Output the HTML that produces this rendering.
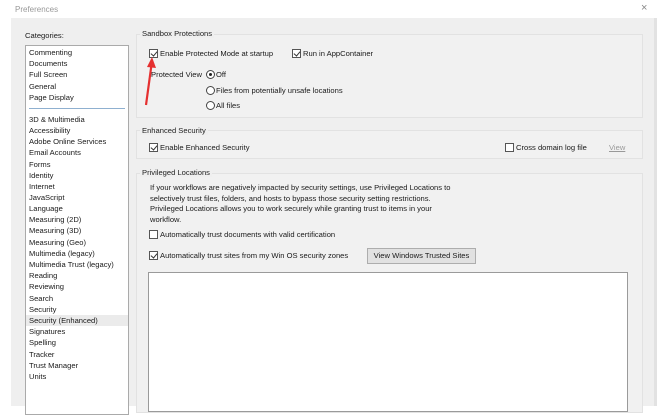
<!DOCTYPE html><html><head><style>
*{margin:0;padding:0;box-sizing:border-box}
body{width:657px;height:406px;overflow:hidden;background:#fff;font-family:"Liberation Sans",sans-serif;font-size:7.6px;color:#1a1a1a;position:relative}
.a{position:absolute;white-space:nowrap}
.dlg{position:absolute;left:11px;top:18px;width:643px;height:388px;background:#efefef}
.grp{position:absolute;border:1px solid #e2e2e2;background:#f1f1f1}
.gt{position:absolute;background:#efefef;padding:0 2px;color:#222}
.cb{position:absolute;width:9px;height:9px;border:1px solid #555;background:#fff}
.cb.c::after{content:"";position:absolute;left:2px;top:0px;width:3px;height:5px;border:solid #333;border-width:0 1px 1px 0;transform:rotate(40deg)}
.rb{position:absolute;width:9px;height:9px;border:1px solid #444;border-radius:50%;background:#fff}
.rb.c::after{content:"";position:absolute;left:2px;top:2px;width:3px;height:3px;border-radius:50%;background:#222}
.li{position:absolute;left:3px}
</style></head><body>
<div class="a" style="left:15px;top:5px;color:#999;font-size:8px">Preferences</div>
<div class="a" style="left:641px;top:2px;color:#888;font-size:11px">×</div>
<div class="dlg"></div>
<div style="position:absolute;left:654px;top:18px;width:3px;height:388px;background:#e2e2e2"></div>
<div class="a" style="left:25px;top:31px">Categories:</div>
<div style="position:absolute;left:25px;top:45px;width:104px;height:370px;background:#fff;border:1px solid #aaa">
<div class="li" style="top:2px">Commenting</div>
<div class="li" style="top:13px">Documents</div>
<div class="li" style="top:24px">Full Screen</div>
<div class="li" style="top:36px">General</div>
<div class="li" style="top:47px">Page Display</div>
<div style="position:absolute;left:3px;top:62px;width:96px;height:1px;background:#8fb0d0"></div>
<div class="li" style="top:69px">3D &amp; Multimedia</div>
<div class="li" style="top:80px">Accessibility</div>
<div class="li" style="top:91px">Adobe Online Services</div>
<div class="li" style="top:102px">Email Accounts</div>
<div class="li" style="top:114px">Forms</div>
<div class="li" style="top:125px">Identity</div>
<div class="li" style="top:136px">Internet</div>
<div class="li" style="top:147px">JavaScript</div>
<div class="li" style="top:158px">Language</div>
<div class="li" style="top:169px">Measuring (2D)</div>
<div class="li" style="top:180px">Measuring (3D)</div>
<div class="li" style="top:192px">Measuring (Geo)</div>
<div class="li" style="top:203px">Multimedia (legacy)</div>
<div class="li" style="top:214px">Multimedia Trust (legacy)</div>
<div class="li" style="top:225px">Reading</div>
<div class="li" style="top:236px">Reviewing</div>
<div class="li" style="top:248px">Search</div>
<div class="li" style="top:259px">Security</div>
<div style="position:absolute;left:0;top:269px;width:102px;height:11px;background:#ebebeb"></div>
<div class="li" style="top:270px">Security (Enhanced)</div>
<div class="li" style="top:281px">Signatures</div>
<div class="li" style="top:292px">Spelling</div>
<div class="li" style="top:304px">Tracker</div>
<div class="li" style="top:315px">Trust Manager</div>
<div class="li" style="top:326px">Units</div>
</div>

<div class="grp" style="left:136px;top:34px;width:507px;height:84px"></div>
<div class="gt a" style="left:140px;top:29px">Sandbox Protections</div>
<div class="cb c" style="left:149px;top:49px"></div>
<div class="a" style="left:160px;top:49px">Enable Protected Mode at startup</div>
<div class="cb c" style="left:292px;top:49px"></div>
<div class="a" style="left:303px;top:49px">Run in AppContainer</div>
<div class="a" style="left:151px;top:70px">Protected View</div>
<div class="rb c" style="left:206px;top:70px"></div><div class="a" style="left:216px;top:70px">Off</div>
<div class="rb" style="left:206px;top:86px"></div><div class="a" style="left:216px;top:86px">Files from potentially unsafe locations</div>
<div class="rb" style="left:206px;top:101px"></div><div class="a" style="left:216px;top:101px">All files</div>

<div class="grp" style="left:136px;top:130px;width:507px;height:29px"></div>
<div class="gt a" style="left:140px;top:126px">Enhanced Security</div>
<div class="cb c" style="left:149px;top:143px"></div>
<div class="a" style="left:160px;top:143px">Enable Enhanced Security</div>
<div class="cb" style="left:505px;top:143px"></div>
<div class="a" style="left:516px;top:143px">Cross domain log file</div>
<div class="a" style="left:609px;top:143px;color:#999;text-decoration:underline">View</div>

<div class="grp" style="left:136px;top:173px;width:507px;height:240px"></div>
<div class="gt a" style="left:140px;top:168px">Privileged Locations</div>
<div class="a" style="left:150px;top:183px;line-height:10.5px">If your workflows are negatively impacted by security settings, use Privileged Locations to<br>selectively trust files, folders, and hosts to bypass those security setting restrictions.<br>Privileged Locations allows you to work securely while granting trust to items in your<br>workflow.</div>
<div class="cb" style="left:149px;top:230px"></div>
<div class="a" style="left:160px;top:230px">Automatically trust documents with valid certification</div>
<div class="cb c" style="left:149px;top:251px"></div>
<div class="a" style="left:160px;top:251px">Automatically trust sites from my Win OS security zones</div>
<div class="a" style="left:367px;top:248px;width:109px;height:16px;background:#e1e1e1;border:1px solid #adadad;text-align:center;line-height:14px">View Windows Trusted Sites</div>
<div style="position:absolute;left:148px;top:272px;width:480px;height:140px;background:#fff;border:1px solid #9a9a9a"></div>

<svg style="position:absolute;left:140px;top:55px" width="20" height="55"><path d="M6 50 L12 6" stroke="#e53030" stroke-width="2.2" fill="none"/><path d="M12 2 L7 12 L16 13 Z" fill="#e53030"/></svg>
</body></html>
